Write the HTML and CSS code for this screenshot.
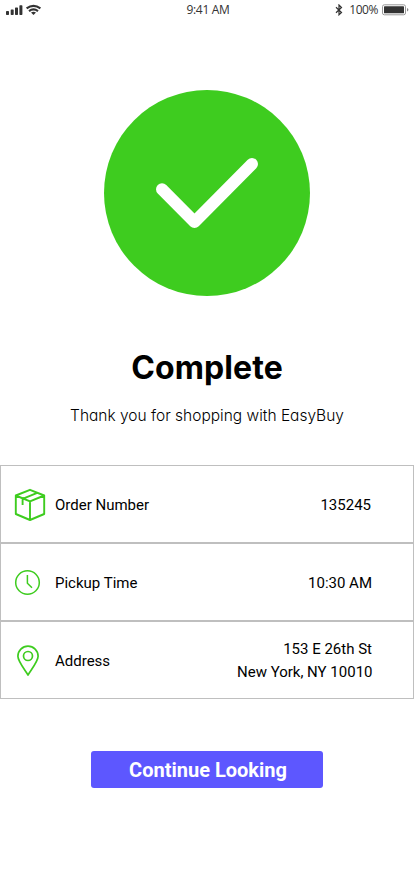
FILE: index.html
```html
<!DOCTYPE html>
<html lang="en">
<head>
<meta charset="utf-8">
<meta name="viewport" content="width=device-width, initial-scale=1">
<title>Order complete</title>
<link rel="stylesheet" href="styles.css">
</head>
<body>
<div class="status">
  <svg class="signal" width="36" height="12" viewBox="0 0 36 12">
    <g fill="#333"><rect x="0" y="7" width="3" height="4" rx=".7"/><rect x="4.7" y="5.4" width="3" height="5.6" rx=".7"/><rect x="9" y="3.4" width="3" height="7.6" rx=".7"/><rect x="13.4" y="1.2" width="3" height="9.8" rx=".7"/></g>
    <g fill="none" stroke="#333" stroke-width="2.1"><path d="M20.6 4.4Q27.5-.8 34.4 4.4"/><path d="M23 7.1Q27.5 3.7 32 7.1"/></g>
    <path d="M25 8.5Q27.5 6.8 30 8.5L27.5 11Z" fill="#333"/>
  </svg>
  <span class="clock">9:41 AM</span>
  <span class="power">
    <svg width="8" height="12" viewBox="0 0 8 12"><path d="M1 3.3L6.5 8.5L4 10.8V1L6.5 3.5L1 8.7" fill="none" stroke="#333" stroke-width="1.2"/></svg>
    <span class="percent">100%</span>
    <svg width="27" height="12" viewBox="0 0 27 12"><rect x=".5" y=".8" width="23" height="10" rx="1.8" fill="#fff" stroke="#999"/><rect x="2" y="2.3" width="20" height="7" rx=".6" fill="#333"/><path d="M25 4v3.6q1.4-.5 1.4-1.8T25 4Z" fill="#888"/></svg>
  </span>
</div>
<main>
  <svg class="badge" width="206" height="206" viewBox="0 0 206 206"><circle cx="103" cy="103" r="103" fill="#3ecc1f"/><path d="M58 99.3L90.5 132L148 74" fill="none" stroke="#fff" stroke-width="12" stroke-linecap="round" stroke-linejoin="round"/></svg>
  <h1>Complete</h1>
  <p class="thanks">Thank you for shopping with EasyBuy</p>
  <section class="details">
    <div class="row">
      <svg class="icon" width="32" height="34" viewBox="0 0 32 34"><path d="M1.8 7.5L16 1.8L30.2 7.5V26L16 32L1.8 26ZM1.8 7.5L16 13.3L30.2 7.5M16 13.3V32M8.6 17V10.8L23.2 4.8"/></svg>
      <span class="label">Order Number</span><span class="value number">135245</span>
    </div>
    <div class="row">
      <svg class="icon thin" width="32" height="34" viewBox="0 0 32 34"><circle cx="13.5" cy="16.5" r="11.8"/><path d="M13.4 9V17.2L18 21.7"/></svg>
      <span class="label">Pickup Time</span><span class="value">10:30 AM</span>
    </div>
    <div class="row">
      <svg class="icon pin" width="32" height="34" viewBox="0 0 32 34"><path d="M14 31C11 26 3.9 17.4 3.9 12.3A10.1 10.1 0 0 1 24.1 12.3C24.1 17.4 17 26 14 31Z"/><circle cx="14" cy="12" r="4.5"/></svg>
      <span class="label">Address</span><span class="value address"><span class="street">153 E 26th St</span><span>New York, NY 10010</span></span>
    </div>
  </section>
  <button class="continue">Continue Looking</button>
</main>
</body>
</html>
```
FILE: styles.css
```css
* { box-sizing: border-box; }
body { margin: 0; background: #fff; color: #000; font-family: Roboto, sans-serif; min-height: 896px; }
.status { display: grid; grid-template-columns: 1fr auto 1fr; align-items: center; height: 20px; padding: 0 5px 0 6px; color: #333; font: 400 12px/20px "Open Sans", sans-serif; }
.status svg { display: block; }
.signal { margin-bottom: 1px; }
.clock { letter-spacing: -.3px; padding-left: 1px; }
.power { display: flex; align-items: center; justify-content: flex-end; }
.percent { margin: 0 4px 0 6px; letter-spacing: -.45px; }
main { display: flex; flex-direction: column; align-items: center; padding-top: 70px; }
.badge { display: block; }
h1 { margin: 49px 0 0; font: 700 32px/46px Inter, sans-serif; letter-spacing: .1px; }
.thanks { margin: 12px 0 0; font: 300 15.5px/25px Inter, sans-serif; font-feature-settings: "cv11"; white-space: nowrap; }
.details { width: 100%; margin-top: 37px; }
.row { display: flex; align-items: center; height: 78px; border: 1px solid #bfbfbf; padding: 2px 41px 0 13px; font-size: 15px; line-height: 23px; }
.icon { flex: none; fill: none; stroke: #3ecc1f; stroke-width: 1.9; stroke-linejoin: round; }
.thin { stroke-width: 1.5; }
.pin { stroke-width: 1.7; }
.label { margin-left: 9px; }
.value { margin-left: auto; text-align: right; }
.number { margin-right: 1px; }
.address { display: flex; flex-direction: column; margin-right: -.5px; }
.street { margin-right: .5px; }
.continue { width: 232px; height: 37px; margin-top: 52px; padding: 2px 0 0 2px; border: 0; border-radius: 3px; background: #5d57ff; color: #fff; font: 700 20px/35px Roboto, sans-serif; }
```
